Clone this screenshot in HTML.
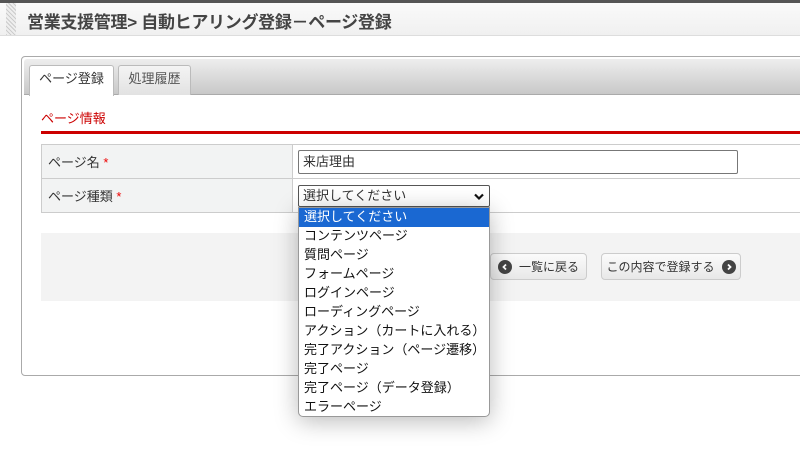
<!DOCTYPE html>
<html><head><meta charset="utf-8"><style>
*{box-sizing:border-box;margin:0;padding:0}
body{width:800px;height:450px;overflow:hidden;background:#fff;font-family:"Liberation Sans","Noto Sans CJK JP",sans-serif;font-size:13px;color:#333;position:relative}
.topbar{position:absolute;left:0;top:0;width:800px;height:3px;background:#555}
.hdr{position:absolute;left:0;top:3px;width:800px;height:33px;background:linear-gradient(#fafafa,#f0f0f0);border-bottom:1px solid #ddd}
.hatch{position:absolute;left:6px;top:0;width:10px;height:32px;background:repeating-linear-gradient(45deg,#ccc 0 1px,#eee 1px 3px)}
.title{position:absolute;left:27px;top:5px;font-size:17px;font-weight:bold;color:#444;letter-spacing:-0.3px}
.panel{position:absolute;left:21px;top:56px;width:800px;height:320px;border:1px solid #aaa;border-radius:4px}
.tabs{position:absolute;left:2px;top:2px;right:0;height:36px;background:linear-gradient(#eee,#c8c8c8);border-bottom:1px solid #aaa;border-radius:3px 0 0 0}
.tab{position:absolute;top:6px;height:30px;border:1px solid #bbb;border-bottom:none;border-radius:3px 3px 0 0;text-align:center;line-height:26px;font-size:13px}
.t1{left:5px;width:85px;background:#fff;height:31px}
.t2{left:94px;width:73px;background:linear-gradient(#f4f4f4,#e2e2e2);color:#555}
.sec{position:absolute;left:41px;top:108px;color:#c00;font-size:13px}
.red{position:absolute;left:41px;top:131px;width:760px;height:3px;background:#c00}
table{position:absolute;left:41px;top:144px;border-collapse:collapse;width:770px}
td{border:1px solid #ccc;height:34px;font-size:13px}
td.l{width:251px;background:#f2f3f3;padding-left:6px}
td.l span{color:#e00}
.inp{position:absolute;left:298px;top:150px;width:440px;height:24px;border:1px solid #777;border-radius:2px;padding-left:4px;line-height:22px;background:#fff}
.sel{position:absolute;left:298px;top:185px;width:192px;height:22px;border:1px solid #555;border-radius:2px;padding-left:4px;line-height:20px;background:#fff}
.sel svg{position:absolute;right:5px;top:7px}
.btnarea{position:absolute;left:41px;top:233px;width:760px;height:68px;background:#f3f3f3}
.btn{position:absolute;top:253px;height:27px;border:1px solid #ccc;border-radius:4px;background:linear-gradient(#fbfbfb,#e8e8e8);font-size:12px;color:#333;display:flex;align-items:center;justify-content:center;gap:7px}
.ic{width:14px;height:14px;border-radius:50%;background:#444;display:flex;align-items:center;justify-content:center}
.dd{position:absolute;left:298px;top:207px;width:192px;height:210px;border:1px solid #999;border-radius:0 0 5px 5px;background:#fff;box-shadow:0 4px 24px rgba(0,0,0,.28);overflow:hidden}
.dd div{height:19px;line-height:18px;padding-left:5px;font-size:13px;color:#111}
.dd .a{background:#1a68d2;color:#fff}
</style></head><body>
<div class="topbar"></div>
<div class="hdr"><div class="hatch"></div><div class="title">営業支援管理&gt; 自動ヒアリング登録－ページ登録</div></div>
<div class="panel"><div class="tabs"><div class="tab t1">ページ登録</div><div class="tab t2">処理履歴</div></div></div>
<div class="sec">ページ情報</div>
<div class="red"></div>
<table><tr><td class="l">ページ名 <span>*</span></td><td></td></tr><tr><td class="l" style="height:33px">ページ種類 <span>*</span></td><td></td></tr></table>
<div class="inp">来店理由</div>
<div class="sel">選択してください<svg width="10" height="8" viewBox="0 0 10 8"><path d="M1 1.5L5 5.5L9 1.5" stroke="#111" stroke-width="2.2" fill="none"/></svg></div>
<div class="btnarea"></div>
<div class="btn" style="left:490px;width:97px"><span class="ic"><svg width="8" height="8" viewBox="0 0 8 8"><path d="M5 1.5L2.5 4L5 6.5" stroke="#fff" stroke-width="1.8" fill="none"/></svg></span>一覧に戻る</div>
<div class="btn" style="left:601px;width:140px">この内容で登録する<span class="ic"><svg width="8" height="8" viewBox="0 0 8 8"><path d="M3 1.5L5.5 4L3 6.5" stroke="#fff" stroke-width="1.8" fill="none"/></svg></span></div>
<div class="dd">
<div class="a">選択してください</div><div>コンテンツページ</div><div>質問ページ</div><div>フォームページ</div><div>ログインページ</div><div>ローディングページ</div><div>アクション（カートに入れる）</div><div>完了アクション（ページ遷移）</div><div>完了ページ</div><div>完了ページ（データ登録）</div><div>エラーページ</div>
</div>
</body></html>
